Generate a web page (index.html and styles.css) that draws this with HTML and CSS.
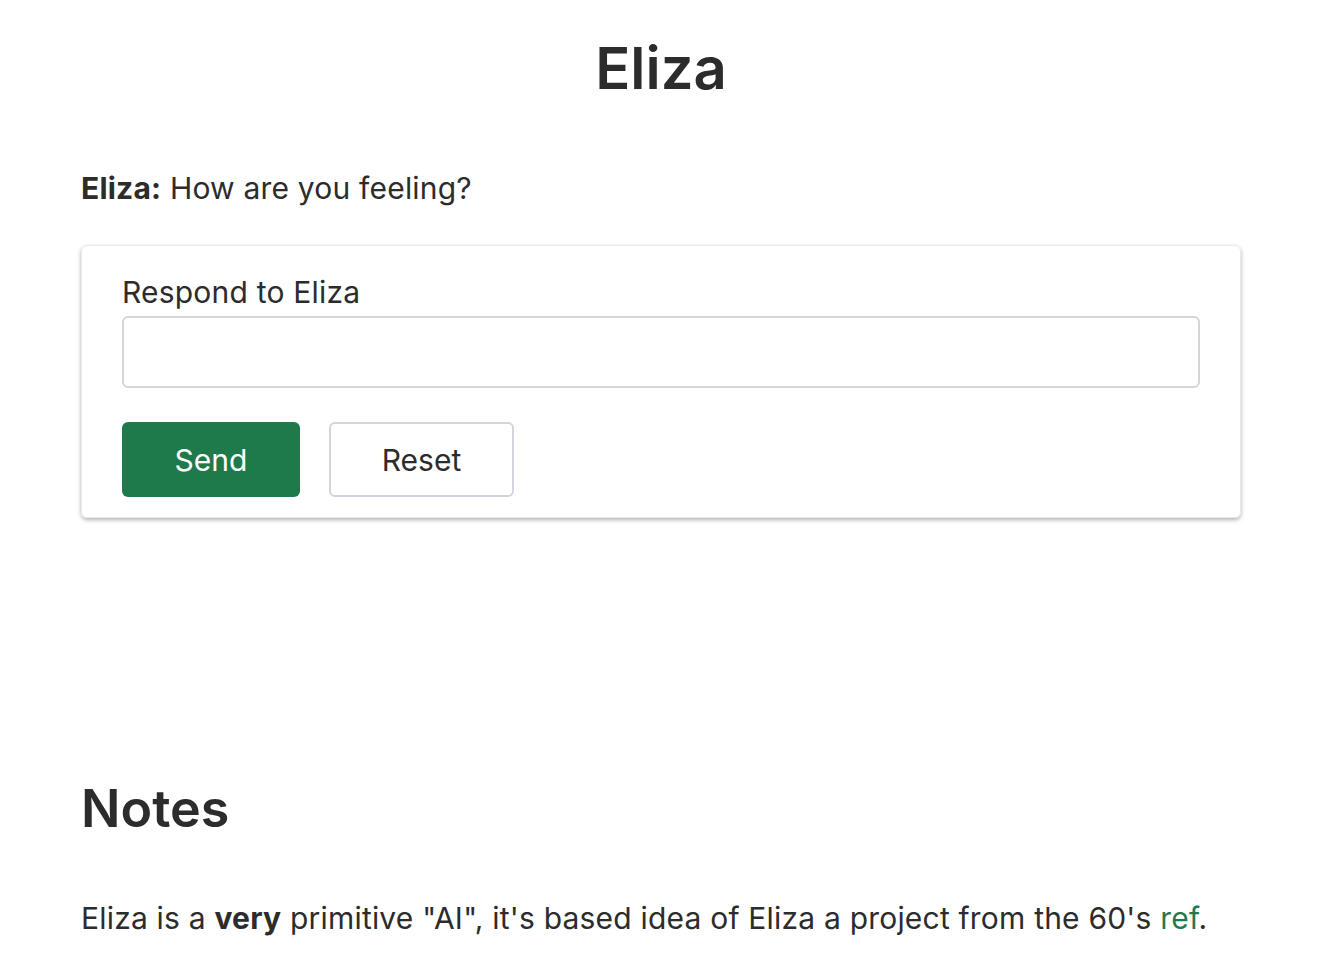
FILE: index.html
```html
<!DOCTYPE html>
<html lang="en">
<head>
<meta charset="utf-8">
<title>Eliza</title>
<link rel="stylesheet" href="styles.css">
</head>
<body>
<main class="page">
  <h1 class="title">Eliza</h1>
  <p class="message"><strong>Eliza:</strong> How are you feeling?</p>
  <form class="card">
    <label class="label" for="resp">Respond to Eliza</label>
    <input class="input" id="resp" type="text">
    <div class="actions">
      <button type="button" class="btn btn-primary">Send</button>
      <button type="button" class="btn btn-outline">Reset</button>
    </div>
  </form>
  <h2 class="notes-title">Notes</h2>
  <p class="notes">Eliza is a <strong>very</strong> primitive "AI", it's based idea of Eliza a project from the 60's <a href="#" class="link">ref</a>.</p>
</main>
</body>
</html>
```
FILE: styles.css
```css
html, body {
  margin: 0;
  padding: 0;
  background: #ffffff;
}
body {
  font-family: Inter, "Noto Sans", sans-serif;
  color: #2c2c2c;
  font-size: 30px;
  letter-spacing: 0.2px;
  padding-right: 16px;
}
.page {
  width: 1160px;
  margin: 0 auto;
}
.title {
  margin: 0;
  padding-top: 28px;
  text-align: center;
  font-size: 58px;
  font-weight: 600;
  letter-spacing: 0;
  line-height: 80px;
}
.message {
  margin: 60px 0 0 0;
  line-height: 40px;
}
.message strong { font-weight: 700; }
.card {
  margin-top: 37px;
  border: 1px solid #e9e9ec;
  border-radius: 6px;
  box-shadow: 0 2px 4px rgba(0,0,0,0.3);
  padding: 24px 40px 20px 40px;
  display: flex;
  flex-direction: column;
}
.label {
  line-height: 44px;
  margin-bottom: 2px;
}
.input {
  height: 72px;
  box-sizing: border-box;
  border: 2px solid #d3d5de;
  border-radius: 6px;
  font: inherit;
  padding: 0 16px;
  outline: none;
}
.actions {
  margin-top: 34px;
  display: flex;
  gap: 29px;
}
.btn {
  height: 75px;
  box-sizing: border-box;
  border-radius: 6px;
  font: inherit;
  font-size: 30px;
  cursor: pointer;
}
.btn-primary {
  width: 178px;
  background: #1f7a4b;
  color: #ffffff;
  border: none;
}
.btn-outline {
  width: 185px;
  background: #ffffff;
  color: #2c2c2c;
  border: 2px solid #d3d5de;
}
.notes-title {
  margin: 256px 0 0 0;
  font-size: 52px;
  font-weight: 600;
  letter-spacing: 0;
  line-height: 70px;
}
.notes {
  margin: 54px 0 0 0;
  line-height: 40px;
}
.notes strong { font-weight: 700; }
.link {
  color: #1f7a4b;
  text-decoration: none;
}
```
